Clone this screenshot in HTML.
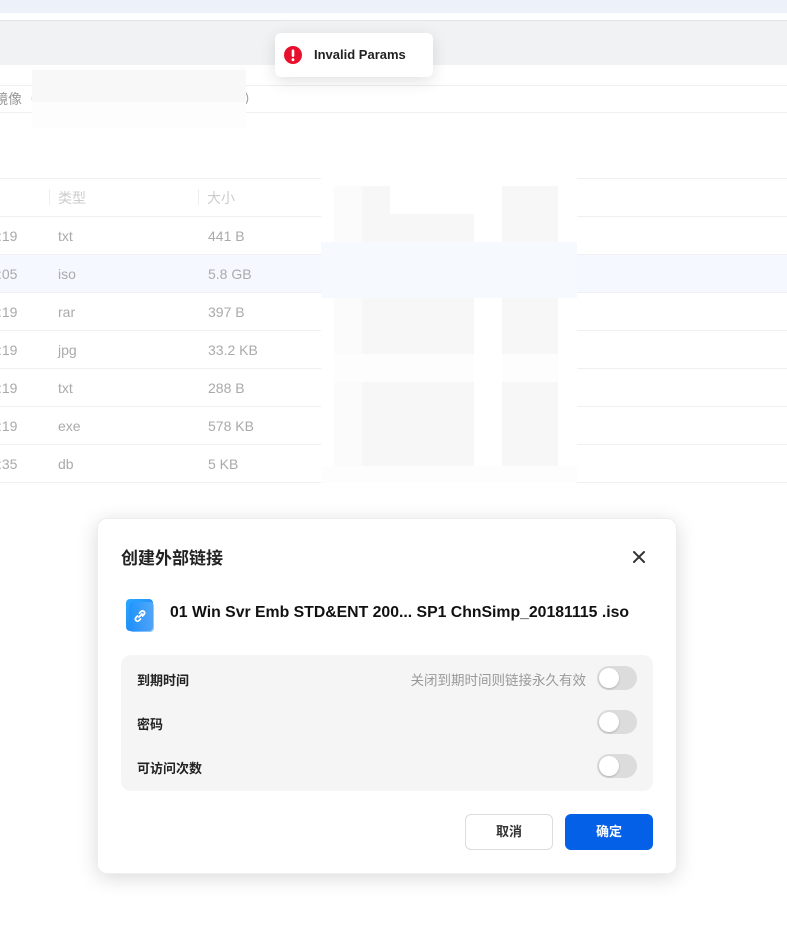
<!DOCTYPE html>
<html><head><meta charset="utf-8">
<style>
*{margin:0;padding:0;box-sizing:border-box}
body{width:787px;height:950px;overflow:hidden;background:#fff;position:relative;font-family:"Liberation Sans","Noto Sans CJK SC",sans-serif;}
.abs{position:absolute}
.row{position:absolute;left:0;width:787px;height:38px;border-bottom:1px solid #f0f0f0;font-size:14px;color:#aaa}
.row span{position:absolute;top:11px}
.cn{font-family:"Liberation Sans","Noto Sans CJK SC",sans-serif}
.tg{position:absolute;right:16px;width:40px;height:24px;border-radius:12px;background:#dcdcdc}
.tg:after{content:"";position:absolute;left:2px;top:2px;width:20px;height:20px;border-radius:50%;background:#fff;box-shadow:0 1px 2px rgba(0,0,0,.2)}
.lab{position:absolute;left:16px;font-size:13px;font-weight:bold;color:#222}
</style></head><body>
<div class="abs" style="left:0;top:0;width:787px;height:13px;background:#edf1fa"></div>
<div class="abs" style="left:0;top:20px;width:787px;height:45px;background:#f1f2f4;border-top:1px solid #e4e4e4"></div>
<div class="abs" style="left:0;top:85px;width:787px;height:28px;border-top:1px solid #efefef;border-bottom:1px solid #efefef"></div>
<div class="abs cn" style="left:-6px;top:89px;font-size:14px;color:#999">镜像（</div>
<div class="abs cn" style="left:244px;top:89px;font-size:14px;color:#999">）</div>
<div class="abs" style="left:32px;top:66px;width:214px;height:62px;background:#fdfdfd"></div>
<div class="abs" style="left:32px;top:70px;width:214px;height:32px;background:#f8f8f8"></div>

<div class="abs" style="left:0;top:178px;width:787px;height:39px;border-top:1px solid #f0f0f0;border-bottom:1px solid #f0f0f0"></div>
<div class="abs" style="left:49px;top:189px;width:1px;height:16px;background:#eee"></div>
<div class="abs" style="left:198px;top:189px;width:1px;height:16px;background:#eee"></div>
<div class="abs cn" style="left:58px;top:188px;font-size:14px;color:#ccc">类型</div>
<div class="abs cn" style="left:207px;top:188px;font-size:14px;color:#ccc">大小</div>

<div class="row" style="top:217px"><span style="left:-2px">:19</span><span style="left:58px">txt</span><span style="left:208px">441 B</span></div>
<div class="row" style="top:255px;background:#f5f8ff"><span style="left:-2px">:05</span><span style="left:58px">iso</span><span style="left:208px">5.8 GB</span></div>
<div class="row" style="top:293px"><span style="left:-2px">:19</span><span style="left:58px">rar</span><span style="left:208px">397 B</span></div>
<div class="row" style="top:331px"><span style="left:-2px">:19</span><span style="left:58px">jpg</span><span style="left:208px">33.2 KB</span></div>
<div class="row" style="top:369px"><span style="left:-2px">:19</span><span style="left:58px">txt</span><span style="left:208px">288 B</span></div>
<div class="row" style="top:407px"><span style="left:-2px">:19</span><span style="left:58px">exe</span><span style="left:208px">578 KB</span></div>
<div class="row" style="top:445px"><span style="left:-2px">:35</span><span style="left:58px">db</span><span style="left:208px">5 KB</span></div>

<!-- blur block -->
<div class="abs" style="left:321px;top:178px;width:256px;height:305px;background:#fff"></div>
<div class="abs" style="left:334px;top:186px;width:140px;height:280px;background:#f7f7f7"></div>
<div class="abs" style="left:334px;top:186px;width:28px;height:280px;background:#fbfbfb"></div>
<div class="abs" style="left:390px;top:186px;width:84px;height:28px;background:#fff"></div>
<div class="abs" style="left:334px;top:354px;width:140px;height:28px;background:#fdfdfd"></div>
<div class="abs" style="left:502px;top:186px;width:56px;height:280px;background:#f7f7f7"></div>
<div class="abs" style="left:502px;top:354px;width:56px;height:28px;background:#fdfdfd"></div>
<div class="abs" style="left:321px;top:242px;width:256px;height:56px;background:#f5f8fd;opacity:.9"></div>
<div class="abs" style="left:321px;top:466px;width:256px;height:17px;background:#fdfdfd"></div>

<!-- toast -->
<div class="abs" style="left:275px;top:33px;width:158px;height:44px;background:#fff;border-radius:6px;box-shadow:0 4px 16px rgba(0,0,0,.12)">
<svg class="abs" style="left:8px;top:12px" width="20" height="20" viewBox="0 0 20 20"><circle cx="10" cy="10" r="9" fill="#e8112d"/><rect x="8.7" y="4.5" width="2.6" height="7.5" rx="1.2" fill="#fff"/><circle cx="10" cy="14.7" r="1.4" fill="#fff"/></svg>
<div class="abs" style="left:39px;top:14px;font-size:13px;font-weight:bold;color:#222">Invalid Params</div>
</div>

<!-- dialog -->
<div class="abs" style="left:97px;top:518px;width:580px;height:356px;background:#fff;border-radius:10px;box-shadow:0 4px 20px rgba(0,0,0,.15);border:1px solid #eee">
<div class="abs cn" style="left:23px;top:25px;font-size:17px;font-weight:bold;color:#222">创建外部链接</div>
<svg class="abs" style="left:534px;top:31px" width="14" height="14" viewBox="0 0 14 14"><path d="M2 2L12 12M12 2L2 12" stroke="#333" stroke-width="2" stroke-linecap="round"/></svg>
<div class="abs" style="left:28px;top:80px;width:27px;height:32px;border-radius:4px;background:linear-gradient(135deg,#2aa9ff,#1a7ef0)"></div>
<div class="abs" style="left:31px;top:83px;width:25px;height:30px;border-radius:4px;background:linear-gradient(90deg,#1e90ff,#6ab2f7);opacity:.7"></div>
<svg class="abs" style="left:34px;top:89px" width="16" height="16" viewBox="0 0 16 16"><path d="M7 9l3-3M5.5 8L4 9.5a2 2 0 003 3L8.5 11M10.5 8L12 6.5a2 2 0 00-3-3L7.5 5" stroke="#fff" stroke-width="1.8" fill="none" stroke-linecap="round"/></svg>
<div class="abs" style="left:72px;top:85px;font-size:15.8px;font-weight:bold;color:#111;white-space:nowrap">01 Win Svr Emb STD&amp;ENT 200... SP1 ChnSimp_20181115 .iso</div>
<div class="abs" style="left:23px;top:136px;width:532px;height:136px;background:#f5f5f5;border-radius:10px">
<div class="lab cn" style="top:15px">到期时间</div>
<div class="abs cn" style="right:67px;top:14px;font-size:13.5px;color:#999">关闭到期时间则链接永久有效</div>
<div class="tg" style="top:11px"></div>
<div class="lab cn" style="top:59px">密码</div>
<div class="tg" style="top:55px"></div>
<div class="lab cn" style="top:103px">可访问次数</div>
<div class="tg" style="top:99px"></div>
</div>
<div class="abs cn" style="left:367px;top:295px;width:88px;height:36px;border:1px solid #ddd;border-radius:6px;font-size:13px;font-weight:bold;color:#333;text-align:center;line-height:34px">取消</div>
<div class="abs cn" style="left:467px;top:295px;width:88px;height:36px;background:#0560e8;border-radius:6px;font-size:13px;font-weight:bold;color:#fff;text-align:center;line-height:36px">确定</div>
</div>
</body></html>
